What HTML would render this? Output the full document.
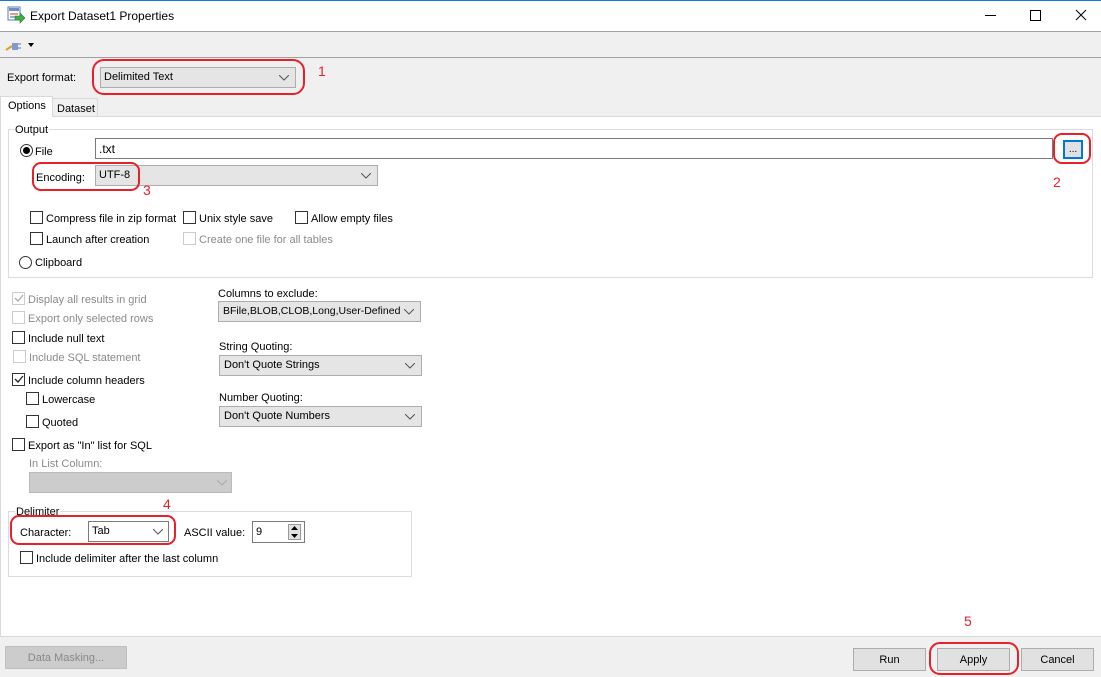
<!DOCTYPE html>
<html><head><meta charset="utf-8"><style>
*{box-sizing:border-box;margin:0;padding:0}
body{width:1101px;height:677px;overflow:hidden;background:#f0f0f0;font-family:"Liberation Sans",Arial,sans-serif;font-size:11px;color:#000;position:relative}
.a{position:absolute;white-space:nowrap}
.t{margin-top:1px}
.cb{position:absolute;width:13px;height:13px;border:1px solid #333;background:#fff}
.cb.d{border-color:#ccc}
.g{color:#8a8a8a}
.sel{position:absolute;background:#e5e5e5;border:1px solid #adadad;height:21px;padding:0 4px;line-height:19px;overflow:hidden}
.sel svg{position:absolute;right:6px;top:7px}
.btn{position:absolute;background:#e1e1e1;border:1px solid #adadad;text-align:center;line-height:22px;height:23px}
.red{position:absolute;border:2px solid #e8202a;border-radius:9px}
.num{position:absolute;color:#e8202a;font-size:14px}
.rad{position:absolute;width:13px;height:13px;border:1px solid #333;border-radius:50%;background:#fff}
</style></head><body>
<div class="a" style="left:0;top:0;width:1101px;height:31px;background:#fff;border-top:1px solid #1979ca"></div>
<svg class="a" style="left:7px;top:6px" width="20" height="18"><rect x="1" y="1" width="12" height="13" fill="#fff" stroke="#5a7fb0"/><rect x="2" y="2" width="10" height="3" fill="#6b8fc4"/><line x1="3" y1="8" x2="11" y2="8" stroke="#c33"/><line x1="3" y1="11" x2="11" y2="11" stroke="#36a"/><path d="M8 10h5v-3l5 5-5 5v-3h-5z" fill="#3fae49" stroke="#2a7a30" stroke-width=".6"/></svg>
<div class="a" style="left:30px;top:9px;font-size:12px">Export Dataset1 Properties</div>
<div class="a" style="left:985px;top:15px;width:11px;height:1px;background:#000"></div>
<div class="a" style="left:1030px;top:10px;width:11px;height:11px;border:1px solid #000"></div>
<svg class="a" style="left:1075px;top:9px" width="12" height="12"><path d="M1 1L11 11M11 1L1 11" stroke="#000" stroke-width="1"/></svg>
<div class="a" style="left:0;top:31px;width:1101px;height:1px;background:#a0a0a0"></div>
<div class="a" style="left:0;top:57px;width:1101px;height:1px;background:#a0a0a0"></div>
<svg class="a" style="left:5px;top:38px" width="32" height="14"><path d="M1 12l6-4" stroke="#d9a520" stroke-width="2"/><path d="M7 5h6v7H7z" fill="#7e9ad6"/><path d="M13 6h3M13 10h3" stroke="#5570b8"/><path d="M23 5l6 0-3 4z" fill="#000"/></svg>
<div class="a t" style="left:7px;top:71px">Export format:</div>
<div class="sel" style="left:100px;top:67px;width:196px;height:21px;padding:0 3px">Delimited Text<svg width="10" height="6"><path d="M0 0l5 5 5-5" fill="none" stroke="#555"/></svg></div>
<div class="red" style="left:92px;top:59px;width:213px;height:36px;border-radius:12px"></div>
<div class="num" style="left:318px;top:63px">1</div>
<div class="a" style="left:52px;top:98px;width:46px;height:19px;border:1px solid #d9d9d9;border-bottom:none;padding:4px 4px">Dataset</div>
<div class="a" style="left:0;top:116px;width:1101px;height:521px;background:#fff;border:1px solid #d9d9d9;border-right:none"></div>
<div class="a" style="left:0;top:96px;width:53px;height:21px;background:#fff;border:1px solid #d9d9d9;border-bottom:none;padding:3px 7px">Options</div>
<div class="a" style="left:8px;top:129px;width:1085px;height:149px;border:1px solid #dcdcdc"></div>
<div class="a" style="left:14px;top:124px;background:#fff;padding:0 1px">Output</div>
<div class="rad" style="left:20px;top:144px"></div><div class="a" style="left:23px;top:147px;width:7px;height:7px;border-radius:50%;background:#000"></div>
<div class="a t" style="left:35px;top:145px">File</div>
<div class="a" style="left:95px;top:138px;width:958px;height:21px;border:1px solid #7a7a7a;background:#fff;padding:3px 3px;font-size:12px">.txt</div>
<div class="a" style="left:1063px;top:140px;width:20px;height:19px;background:#e1e1e1;border:2px solid #0078d7;text-align:center;font-size:10px;line-height:16px;color:#003">...</div>
<div class="red" style="left:1053px;top:133px;width:38px;height:31px"></div>
<div class="num" style="left:1053px;top:174px">2</div>
<div class="a t" style="left:36px;top:171px">Encoding:</div>
<div class="sel" style="left:95px;top:165px;width:283px;padding:0 3px">UTF-8<svg width="10" height="6"><path d="M0 0l5 5 5-5" fill="none" stroke="#555"/></svg></div>
<div class="red" style="left:32px;top:162px;width:108px;height:29px"></div>
<div class="num" style="left:143px;top:182px">3</div>
<div class="cb" style="left:30px;top:211px"></div><div class="a t" style="left:46px;top:212px">Compress file in zip format</div>
<div class="cb" style="left:183px;top:211px"></div><div class="a t" style="left:199px;top:212px">Unix style save</div>
<div class="cb" style="left:295px;top:211px"></div><div class="a t" style="left:311px;top:212px">Allow empty files</div>
<div class="cb" style="left:30px;top:232px"></div><div class="a t" style="left:46px;top:233px">Launch after creation</div>
<div class="cb d" style="left:183px;top:232px"></div><div class="a g t" style="left:199px;top:233px">Create one file for all tables</div>
<div class="rad" style="left:19px;top:256px"></div><div class="a t" style="left:35px;top:256px">Clipboard</div>
<div class="cb d" style="left:12px;top:292px"></div><svg class="a" style="left:14px;top:294px" width="10" height="9"><path d="M1 4l3 3 5-6" fill="none" stroke="#aaa" stroke-width="1.3"/></svg><div class="a g t" style="left:28px;top:293px">Display all results in grid</div>
<div class="cb d" style="left:12px;top:311px"></div><div class="a g t" style="left:28px;top:312px">Export only selected rows</div>
<div class="cb" style="left:12px;top:331px"></div><div class="a t" style="left:28px;top:332px">Include null text</div>
<div class="cb d" style="left:13px;top:350px"></div><div class="a g t" style="left:29px;top:351px">Include SQL statement</div>
<div class="cb" style="left:12px;top:373px"></div><svg class="a" style="left:14px;top:375px" width="10" height="9"><path d="M1 4l3 3 5-6" fill="none" stroke="#222" stroke-width="1.3"/></svg><div class="a t" style="left:28px;top:374px">Include column headers</div>
<div class="cb" style="left:26px;top:392px"></div><div class="a t" style="left:42px;top:393px">Lowercase</div>
<div class="cb" style="left:26px;top:415px"></div><div class="a t" style="left:42px;top:416px">Quoted</div>
<div class="cb" style="left:12px;top:438px"></div><div class="a t" style="left:28px;top:439px">Export as "In" list for SQL</div>
<div class="a g t" style="left:29px;top:457px">In List Column:</div>
<div class="a" style="left:29px;top:472px;width:203px;height:21px;background:#ccc;border:1px solid #bbb"></div><svg class="a" style="left:217px;top:480px" width="10" height="6"><path d="M0 0l5 5 5-5" fill="none" stroke="#aaa"/></svg>
<div class="a t" style="left:218px;top:287px">Columns to exclude:</div>
<div class="sel" style="left:218px;top:301px;width:203px;font-size:10.5px">BFile,BLOB,CLOB,Long,User-Defined<svg width="10" height="6"><path d="M0 0l5 5 5-5" fill="none" stroke="#555"/></svg></div>
<div class="a t" style="left:219px;top:340px">String Quoting:</div>
<div class="sel" style="left:219px;top:355px;width:203px">Don't Quote Strings<svg width="10" height="6"><path d="M0 0l5 5 5-5" fill="none" stroke="#555"/></svg></div>
<div class="a t" style="left:219px;top:391px">Number Quoting:</div>
<div class="sel" style="left:219px;top:406px;width:203px">Don't Quote Numbers<svg width="10" height="6"><path d="M0 0l5 5 5-5" fill="none" stroke="#555"/></svg></div>
<div class="a" style="left:8px;top:511px;width:404px;height:66px;border:1px solid #dcdcdc"></div>
<div class="a" style="left:15px;top:506px;background:#fff;padding:0 1px">Delimiter</div>
<div class="num" style="left:163px;top:496px">4</div>
<div class="a t" style="left:20px;top:526px">Character:</div>
<div class="a" style="left:88px;top:521px;width:81px;height:21px;border:1px solid #7a7a7a;background:#fff;padding:0 3px;line-height:19px">Tab<svg style="position:absolute;right:5px;top:7px" width="10" height="6"><path d="M0 0l5 5 5-5" fill="none" stroke="#555"/></svg></div>
<div class="red" style="left:10px;top:515px;width:166px;height:30px"></div>
<div class="a t" style="left:184px;top:526px">ASCII value:</div>
<div class="a" style="left:252px;top:521px;width:53px;height:22px;border:1px solid #7a7a7a;background:#fff;padding:0 3px;line-height:20px">9</div>
<div class="a" style="left:288px;top:524px;width:13px;height:16px;background:#e1e1e1;border:1px solid #999"></div>
<svg class="a" style="left:289px;top:525px" width="11" height="14"><path d="M2 5l3.5-4 3.5 4z M2 9l3.5 4 3.5-4z" fill="#000"/></svg>
<div class="cb" style="left:20px;top:551px"></div><div class="a t" style="left:36px;top:552px">Include delimiter after the last column</div>
<div class="num" style="left:964px;top:613px">5</div>
<div class="btn" style="left:5px;top:646px;width:122px;color:#888;background:#ccc;border-color:#bfbfbf">Data Masking...</div>
<div class="btn" style="left:853px;top:648px;width:73px">Run</div>
<div class="btn" style="left:937px;top:648px;width:73px">Apply</div>
<div class="btn" style="left:1021px;top:648px;width:73px">Cancel</div>
<div class="red" style="left:929px;top:642px;width:90px;height:33px;border-radius:11px"></div>
</body></html>
